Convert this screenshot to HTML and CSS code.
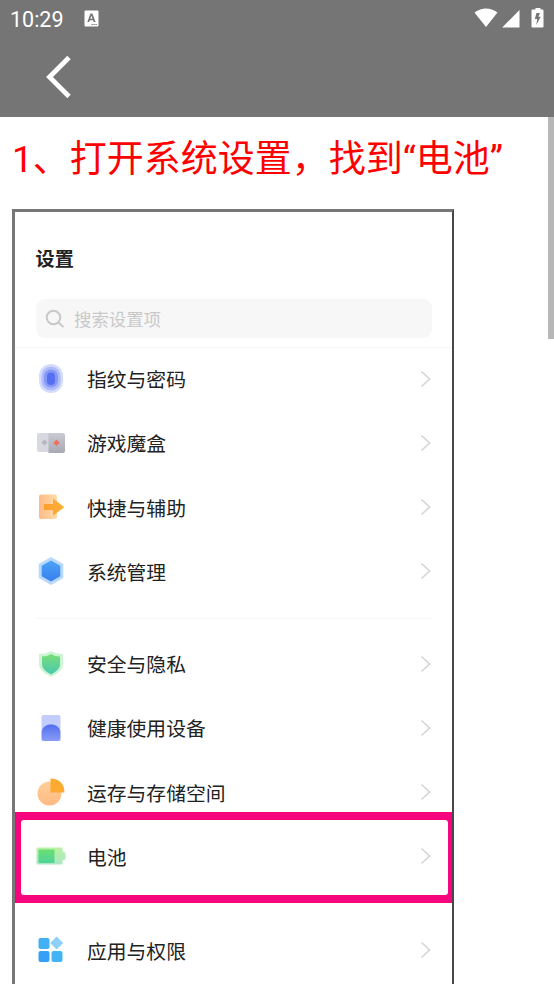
FILE: index.html
```html
<!DOCTYPE html>
<html lang="zh-CN">
<head>
<meta charset="utf-8">
<title>设置</title>
<link rel="stylesheet" href="styles.css">
</head>
<body>
<header class="header">
  <div class="status">
    <span class="clock">10:29</span>
    <svg class="app" width="15" height="17" viewBox="0 0 15 17"><path fill="#fff" fill-rule="evenodd" d="M1.5.5h12q1 0 1 1v14q0 1-1 1h-12q-1 0-1-1v-14q0-1 1-1zM6.5 3.5 3.3 12h1.9l.6-1.7h3.3l.6 1.7h1.9L8.4 3.500zM7.450 5.700l1.100 3.100H6.350zM7.500 14h1.300v1H7.500zm2 0h1.300v1H9.500zm2 0h1.300v1h-1.300z"/></svg>
    <svg class="signals" width="72" height="22" viewBox="0 0 72 22"><g fill="#fff"><path d="M.5 4.500Q12 -3.500 23.500 4.500L12 19z"/><path d="M45.500 2v17.500H28.200z"/><path fill-rule="evenodd" d="M61.500 0h5v1.500h2q1 0 1 1v16q0 1-1 1h-10q-1 0-1-1v-16q0-1 1-1h3zM62.500 5 60.800 11h2.400l-.9 6 4.400-8.200h-2.300L66 5z"/></g></svg>
  </div>
  <svg class="back" width="26" height="42" viewBox="0 0 26 42"><path d="M23 1.500 3.500 21 23 40.500" fill="none" stroke="#fff" stroke-width="4.800"/></svg>
</header>
<main class="page">
  <h1 class="step">1、打开系统设置，找到“电池”</h1>
  <section class="phone">
    <h2 class="title">设置</h2>
    <div class="search">
      <svg width="20" height="20" viewBox="0 0 20 20"><g fill="none" stroke="#c8c8c8" stroke-width="2"><circle cx="8.500" cy="8.500" r="6.800"/><path d="m13.500 13.500 5 4.500"/></g></svg>
      <span>搜索设置项</span>
    </div>
    <div class="group first">
      <div class="row"><svg class="icon" viewBox="0 0 30 30"><rect x="3" y="0" width="24" height="29" rx="12" fill="#d5dcfb"/><rect x="5.500" y="2.500" width="19" height="24" rx="9.500" fill="#aebbfa"/><rect x="8" y="5.500" width="14" height="18" rx="7" fill="#8598f6"/><rect x="11" y="8.500" width="8" height="12.500" rx="4" fill="#566fee"/></svg><span>指纹与密码</span><svg class="arrow" viewBox="0 0 12 18"><path d="m1.500 1.500 8 7.500-8 7.500"/></svg></div>
      <div class="row"><svg class="icon" viewBox="0 0 30 30"><defs><linearGradient id="gray" x2="0" y2="1"><stop stop-color="#c9c9d1"/><stop offset="1" stop-color="#a9a9b4"/></linearGradient></defs><rect x="1" y="5" width="15" height="19" rx="2" fill="#d8d8e0"/><path d="M12.500 5H27q2 0 2 2v16q0 2-2 2H12.500z" fill="url(#gray)"/><path d="m8.500 11.500 3 3-3 3-3-3z" fill="#b5b5c4"/><path d="m20.500 11.500 3.200 3.200-3.200 3.200-3.200-3.200z" fill="#ee705e"/></svg><span>游戏魔盒</span><svg class="arrow" viewBox="0 0 12 18"><path d="m1.500 1.500 8 7.500-8 7.500"/></svg></div>
      <div class="row"><svg class="icon" viewBox="0 0 30 30"><defs><linearGradient id="door"><stop stop-color="#ffba86"/><stop offset="1" stop-color="#ffdca8"/></linearGradient><linearGradient id="exit"><stop stop-color="#ff9e2c"/><stop offset="1" stop-color="#ffb23c"/></linearGradient></defs><rect x="3" y="2.500" width="18" height="24.500" rx="2" fill="url(#door)"/><path d="M8 12h9V7.500q0-1 1-.3l9.500 7.300q.7.700 0 1.400L18 23q-1 .6-1-.5V18H8z" fill="url(#exit)"/></svg><span>快捷与辅助</span><svg class="arrow" viewBox="0 0 12 18"><path d="m1.500 1.500 8 7.500-8 7.500"/></svg></div>
      <div class="row"><svg class="icon" viewBox="0 0 30 30"><defs><linearGradient id="hex" x2="0" y2="1"><stop stop-color="#4ca3f8"/><stop offset="1" stop-color="#397eed"/></linearGradient></defs><path d="M15 1 27.300 8v14L15 29 2.700 22V8z" fill="#b9d9fc"/><path d="m15 4.500 9.300 5.300v10.400L15 25.500l-9.300-5.300V9.800z" fill="url(#hex)"/></svg><span>系统管理</span><svg class="arrow" viewBox="0 0 12 18"><path d="m1.500 1.500 8 7.500-8 7.500"/></svg></div>
    </div>
    <div class="group second">
      <div class="row"><svg class="icon" viewBox="0 0 30 30"><defs><linearGradient id="shield" x2="0" y2="1"><stop stop-color="#78df76"/><stop offset="1" stop-color="#4ac7b0"/></linearGradient></defs><path d="M15 2q5 3 12 3v11q0 6-12 12Q3 22 3 16V5q7 0 12-3z" fill="#cdf4d4"/><path d="M15 5q4 2.500 9 2.500V16q0 4.500-9 9.500-9-5-9-9.500V7.500q5 0 9-2.500z" fill="url(#shield)"/></svg><span>安全与隐私</span><svg class="arrow" viewBox="0 0 12 18"><path d="m1.500 1.500 8 7.500-8 7.500"/></svg></div>
      <div class="row"><svg class="icon" viewBox="0 0 30 30"><defs><linearGradient id="bed" x2="0" y2="1"><stop stop-color="#536eed"/><stop offset="1" stop-color="#899bf8"/></linearGradient></defs><rect x="5.500" y="2" width="19" height="15" rx="2" fill="#c3cdfb"/><path d="M5.500 26V18C7 14 10 11.500 15 11.500S23 14 24.500 18v8q0 2-2 2h-15q-2 0-2-2z" fill="url(#bed)"/></svg><span>健康使用设备</span><svg class="arrow" viewBox="0 0 12 18"><path d="m1.500 1.500 8 7.500-8 7.500"/></svg></div>
      <div class="row"><svg class="icon" viewBox="0 0 30 30"><defs><linearGradient id="pie" x2="0" y2="1"><stop stop-color="#ffcf9a"/><stop offset="1" stop-color="#ffb981"/></linearGradient></defs><circle cx="13.500" cy="16.500" r="12" fill="url(#pie)"/><path d="M14.500 1.500Q28 2 28.500 15.500h-14z" fill="#fdaa31"/></svg><span>运存与存储空间</span><svg class="arrow" viewBox="0 0 12 18"><path d="m1.500 1.500 8 7.500-8 7.500"/></svg></div>
      <div class="row battery"><svg class="icon" viewBox="0 0 30 30"><defs><linearGradient id="cell" x2="0" y2="1"><stop stop-color="#69df70"/><stop offset="1" stop-color="#50d39c"/></linearGradient><linearGradient id="case" x2="0" y2="1"><stop stop-color="#b9f2a4"/><stop offset="1" stop-color="#a9e8c0"/></linearGradient></defs><path d="M2 6.500h23q1.500 0 1.500 1.500v2.500q3 .5 3 2v5q0 1.500-3 2V22q0 1.500-1.500 1.500H2Q.5 23.500.5 22V8Q.5 6.500 2 6.500z" fill="url(#case)"/><rect x="2.500" y="8.500" width="16" height="13.500" rx="1" fill="url(#cell)"/></svg><span>电池</span><svg class="arrow" viewBox="0 0 12 18"><path d="m1.500 1.500 8 7.500-8 7.500"/></svg></div>
    </div>
    <div class="group">
      <div class="row"><svg class="icon" viewBox="0 0 30 30"><rect x="2.500" y="3" width="11" height="11" rx="2" fill="#42b0f4"/><rect x="2.500" y="16" width="11" height="11" rx="2" fill="#36a0f6"/><rect x="15.500" y="16" width="11" height="11" rx="2" fill="#42b3f4"/><path d="m20.700 1.500 6.500 6.500-6.500 6.500L14.200 8z" fill="#8dd0fb"/></svg><span>应用与权限</span><svg class="arrow" viewBox="0 0 12 18"><path d="m1.500 1.500 8 7.500-8 7.500"/></svg></div>
    </div>
  </section>
  <div class="scrollbar"></div>
</main>
</body>
</html>
```
FILE: styles.css
```css
* { box-sizing: border-box; }
body {
  margin: 0;
  height: 984px;
  overflow: hidden;
  background: #fff;
  font-family: Roboto, "Noto Sans CJK SC", sans-serif;
}
.header { height: 117px; background: #757575; }
.status {
  display: flex;
  align-items: flex-start;
  height: 56px;
  padding: 8px 8px 0 10px;
  color: #fff;
}
.clock { width: 54px; font-size: 21.5px; line-height: 23px; }
.app { margin: 2px 0 0 20px; }
.signals { margin-left: auto; }
.back { display: block; margin-left: 46px; }
.page { position: relative; height: 867px; overflow: hidden; }
.step {
  margin: 0;
  padding: 16px 0 0 12px;
  height: 92px;
  color: #f00;
  font-size: 37px;
  line-height: 54px;
  font-weight: 400;
  white-space: nowrap;
}
.phone {
  width: 442px;
  height: 800px;
  margin-left: 12px;
  border: 3px solid #777;
  border-right: 2px solid #444849;
  color: #222;
}
.title {
  margin: 0;
  padding: 33px 0 0 20.5px;
  height: 87px;
  font-size: 19.2px;
  line-height: 30px;
  font-weight: 700;
}
.search {
  display: flex;
  align-items: center;
  gap: 9px;
  width: 396px;
  height: 39px;
  margin-left: 21px;
  padding-left: 9px;
  border-radius: 9px;
  background: #f7f7f7;
  color: #c9c9c9;
  font-size: 17.4px;
}
.first {
  margin-top: 9px;
  border-top: 1px solid #f7f7f7;
}
.second { margin: 28px 0 29.5px; position: relative; }
.second::before {
  content: "";
  position: absolute;
  inset: -15px 20px auto 21px;
  height: 1px;
  background: #f7f7f7;
}
.row {
  display: flex;
  align-items: center;
  height: 64.25px;
  padding: 0 20px 3px 21px;
  font-family: "Noto Sans CJK SC", sans-serif;
  font-size: 19.8px;
  position: relative;
}
.icon { width: 30px; height: 30px; margin-right: 21px; flex: none; }
.arrow {
  width: 12px;
  height: 18px;
  margin-left: auto;
  fill: none;
  stroke: #d6d6d6;
  stroke-width: 1.7;
}
.battery::before,
.battery::after {
  content: "";
  position: absolute;
  border: solid #f7047f;
}
.battery::before {
  inset: -13.5px 0 -12.5px 0;
  border-width: 8px 4px 8px 6px;
}
.battery::after {
  inset: -8.5px 1px -7.5px 3px;
  border-width: 3px;
  border-radius: 6px;
}
.scrollbar {
  position: absolute;
  top: 0;
  right: 0;
  width: 6px;
  height: 222px;
  background: #b7b7b7;
}
```
